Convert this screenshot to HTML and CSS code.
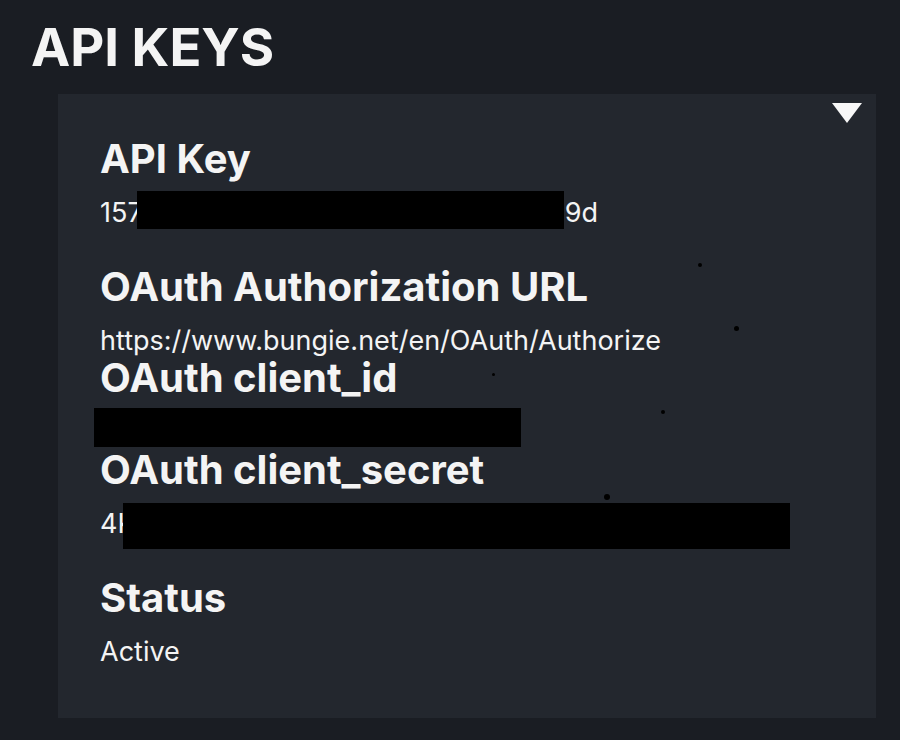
FILE: index.html
```html
<!DOCTYPE html>
<html lang="en">
<head>
<meta charset="utf-8">
<title>API Keys</title>
<link rel="stylesheet" href="styles.css">
</head>
<body>
<h1 class="page-title">API KEYS</h1>
<section class="panel">
  <span class="toggle" aria-label="collapse"></span>
  <div class="field">
    <h2 class="label">API Key</h2>
    <div class="value row"><span>157</span><span class="redact redact-key"></span><span>9d</span></div>
  </div>
  <div class="field">
    <h2 class="label">OAuth Authorization URL</h2>
    <div class="value value-tight">https://www.bungie.net/en/OAuth/Authorize</div>
  </div>
  <div class="field">
    <h2 class="label label-id">OAuth client_id</h2>
    <div class="value row value-id"><span class="redact redact-id"></span></div>
  </div>
  <div class="field">
    <h2 class="label">OAuth client_secret</h2>
    <div class="value row"><span>4K</span><span class="redact redact-secret"></span></div>
  </div>
  <div class="field">
    <h2 class="label">Status</h2>
    <div class="value value-last">Active</div>
  </div>
  <span class="dot dot1"></span>
  <span class="dot dot2"></span>
  <span class="dot dot3"></span>
  <span class="dot dot4"></span>
  <span class="dot dot5"></span>
</section>
</body>
</html>
```
FILE: styles.css
```css
html, body {
  margin: 0;
  padding: 0;
}
body {
  background: #1a1d23;
  color: #f4f4f4;
  font-family: Inter, "Noto Sans", sans-serif;
  padding: 15px 24px 0 31px;
  height: 740px;
  box-sizing: border-box;
  overflow: hidden;
}
.page-title {
  margin: 0;
  font-size: 52.6px;
  line-height: 64px;
  font-weight: 700;
}
.panel {
  position: relative;
  margin: 15px 0 0 27px;
  background: #23272e;
  padding: 41px 42px 49px 42px;
}
.toggle {
  position: absolute;
  top: 9px;
  right: 14px;
  width: 0;
  height: 0;
  border-left: 15px solid transparent;
  border-right: 15px solid transparent;
  border-top: 20px solid #f7f7f7;
}
.label {
  margin: 0 0 13px 0;
  font-size: 40px;
  line-height: 48px;
  font-weight: 700;
}
.label-id {
  margin-bottom: 9px;
}
.value {
  font-size: 27px;
  line-height: 34px;
  font-weight: 400;
  margin-bottom: 33px;
  white-space: nowrap;
}
.value-tight {
  margin-bottom: -4px;
}
.value-id {
  margin-bottom: 1px;
}
.value-last {
  margin-top: 2px;
  margin-bottom: 0;
}
.row {
  display: flex;
  align-items: center;
  height: 34px;
}
.redact {
  display: inline-block;
  background: #000;
  flex: none;
}
.redact-key {
  width: 427px;
  height: 38px;
  margin-left: -6px;
  margin-bottom: 6px;
  margin-right: 1px;
}
.redact-id {
  width: 427px;
  height: 39px;
  margin-left: -6px;
  margin-bottom: 2px;
}
.redact-secret {
  width: 667px;
  height: 46px;
  margin-left: -13px;
  margin-top: 4px;
}
.dot {
  position: absolute;
  background: #000;
  border-radius: 50%;
}
.dot1 { left: 640px; top: 169px; width: 4px; height: 4px; }
.dot2 { left: 676px; top: 232px; width: 5px; height: 5px; }
.dot3 { left: 434px; top: 279px; width: 3px; height: 3px; }
.dot4 { left: 603px; top: 316px; width: 4px; height: 4px; }
.dot5 { left: 546px; top: 400px; width: 6px; height: 6px; }
```
